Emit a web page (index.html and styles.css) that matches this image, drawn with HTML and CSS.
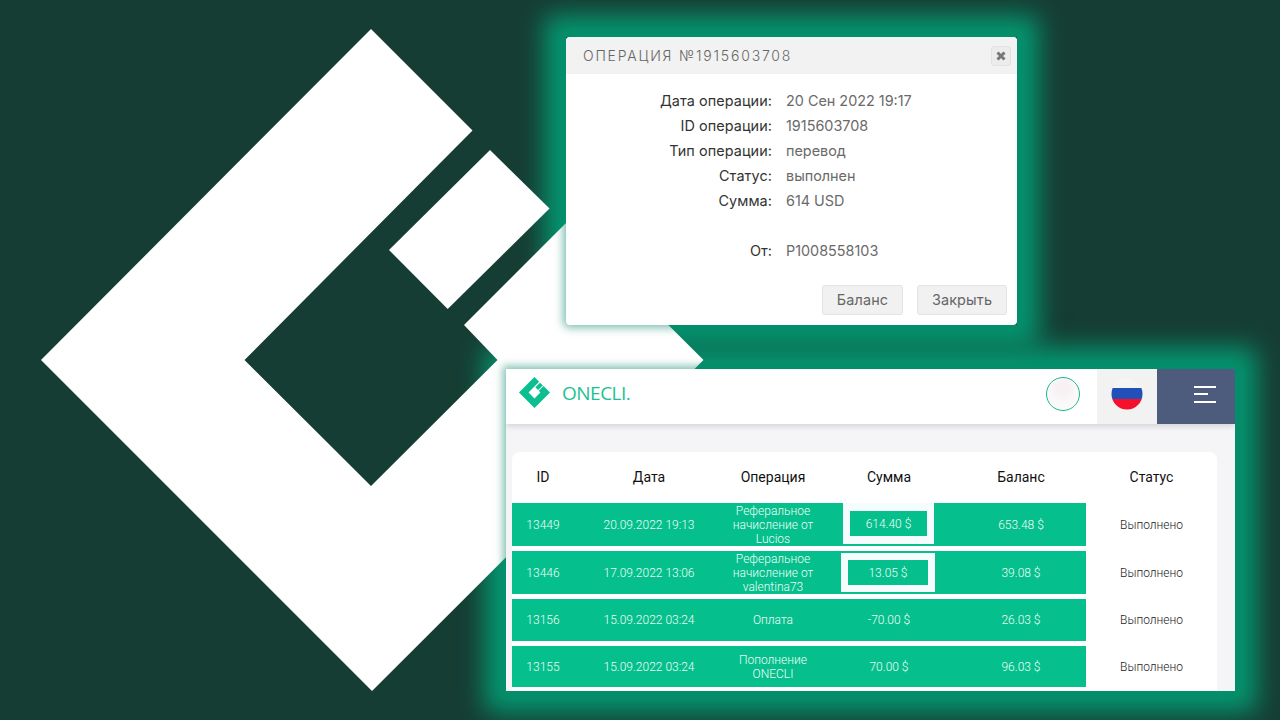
FILE: index.html
```html
<!DOCTYPE html>
<html lang="ru">
<head>
<meta charset="utf-8">
<title>ONECLI</title>
<link rel="stylesheet" href="styles.css">
</head>
<body>
<main class="canvas">
  <div class="glow glow-modal"></div>
  <div class="glow glow-app"></div>
  <svg class="mark" width="1280" height="720" viewBox="0 0 1280 720">
    <polygon fill="#fff" points="371,29 472.5,130.5 244.5,360 371,486 497.5,360 464,325 566,223 703.5,360 372,691 41,360"/>
    <polygon fill="#fff" points="490,150 549.5,208.5 447.7,309 389,250"/>
  </svg>

  <section class="modal">
    <header class="modal-head">
      <h2 class="modal-title">ОПЕРАЦИЯ №1915603708</h2>
      <span class="modal-close">
        <svg width="12" height="12" viewBox="0 0 12 12"><path d="M2.5 2.5 9.5 9.5M9.5 2.5 2.5 9.5" stroke="#777" stroke-width="3" fill="none"/></svg>
      </span>
    </header>
    <dl class="details">
      <dt>Дата операции:</dt><dd>20 Сен 2022 19:17</dd>
      <dt>ID операции:</dt><dd>1915603708</dd>
      <dt>Тип операции:</dt><dd>перевод</dd>
      <dt>Статус:</dt><dd>выполнен</dd>
      <dt>Сумма:</dt><dd>614 USD</dd>
      <dt>&nbsp;</dt><dd>&nbsp;</dd>
      <dt>От:</dt><dd>P1008558103</dd>
    </dl>
    <footer class="modal-foot">
      <span class="btn btn-balance">Баланс</span>
      <span class="btn btn-close">Закрыть</span>
    </footer>
  </section>

  <section class="app">
    <nav class="nav">
      <div class="brand">
        <svg class="brand-icon" width="31" height="31" viewBox="41 29 662 662">
          <polygon fill="#0bbf8e" points="371,29 472.5,130.5 244.5,360 371,486 497.5,360 464,325 566,223 703.5,360 372,691 41,360"/>
          <polygon fill="#0bbf8e" points="490,150 549.5,208.5 447.7,309 389,250"/>
        </svg>
        <span class="brand-name">ONECLI.</span>
      </div>
      <div class="avatar"></div>
      <div class="lang">
        <svg width="32" height="32" viewBox="0 0 32 32">
          <defs><clipPath id="flag-disc"><circle cx="16" cy="16" r="15.5"/></clipPath></defs>
          <g clip-path="url(#flag-disc)">
            <rect width="32" height="10" fill="#f5f5f5"/>
            <rect y="10" width="32" height="11" fill="#2150b8"/>
            <rect y="21" width="32" height="11" fill="#f5102c"/>
          </g>
        </svg>
      </div>
      <div class="menu">
        <span class="bar"></span>
        <span class="bar bar-short"></span>
        <span class="bar"></span>
      </div>
    </nav>
    <div class="app-body">
      <div class="card">
        <div class="thead">
          <span>ID</span><span>Дата</span><span>Операция</span><span>Сумма</span><span>Баланс</span><span>Статус</span>
        </div>
        <div class="row">
          <span class="cell">13449</span><span class="cell">20.09.2022 19:13</span><span class="cell">Реферальное начисление от Lucios</span><span class="cell"><b class="sum sum-first">614.40 $</b></span><span class="cell">653.48 $</span><span class="status">Выполнено</span>
        </div>
        <div class="row">
          <span class="cell">13446</span><span class="cell">17.09.2022 13:06</span><span class="cell">Реферальное начисление от valentina73</span><span class="cell"><b class="sum sum-second">13.05 $</b></span><span class="cell">39.08 $</span><span class="status">Выполнено</span>
        </div>
        <div class="row row-mid">
          <span class="cell">13156</span><span class="cell">15.09.2022 03:24</span><span class="cell">Оплата</span><span class="cell">-70.00 $</span><span class="cell">26.03 $</span><span class="status">Выполнено</span>
        </div>
        <div class="row row-last">
          <span class="cell">13155</span><span class="cell">15.09.2022 03:24</span><span class="cell">Пополнение ONECLI</span><span class="cell">70.00 $</span><span class="cell">96.03 $</span><span class="status">Выполнено</span>
        </div>
      </div>
    </div>
  </section>
</main>
</body>
</html>
```
FILE: styles.css
```css
* { box-sizing: border-box; }
html, body { margin: 0; padding: 0; }
body { background: #163d33; font-family: "Roboto", "Liberation Sans", sans-serif; }
.canvas { position: relative; width: 1280px; height: 720px; overflow: hidden; background: #163d33; }
.mark { position: absolute; left: 0; top: 0; }

.glow { position: absolute; box-shadow: 0 0 24px 21px #059a73; }
.glow-modal { left: 566px; top: 37px; width: 451px; height: 288px; }
.glow-app { left: 506px; top: 369px; width: 729px; height: 322px; }

.modal {
  position: absolute; left: 566px; top: 37px; width: 451px; height: 288px;
  background: #fff; border-radius: 4px;
  box-shadow: 0 0 8px 3px rgba(4, 130, 100, .5);
  display: flex; flex-direction: column;
  font-family: "Inter", "Open Sans", sans-serif;
}
.modal-head {
  height: 37px; background: #f2f2f2; border-radius: 4px 4px 0 0;
  display: flex; align-items: center; justify-content: space-between;
  padding: 0 6px 0 17px;
}
.modal-title { margin: 0; font-size: 14px; font-weight: 300; letter-spacing: 1.8px; color: #666; }
.modal-close {
  width: 20px; height: 20px; background: #ececec; border: 1px solid #e2e2e2; border-radius: 3px;
  display: flex; align-items: center; justify-content: center;
}
.details {
  margin: 14px 0 0; display: grid; grid-template-columns: 206px 1fr; column-gap: 14px;
  font-size: 14.4px; line-height: 25px;
}
.details dt { text-align: right; color: #333; letter-spacing: .08px; }
.details dd { margin: 0; color: #6a6a6a; }
.modal-foot { margin-top: auto; padding: 0 10px 10px 0; display: flex; justify-content: flex-end; gap: 14px; }
.btn {
  height: 30px; background: #f1f1f1; border: 1px solid #e3e3e3; border-radius: 3px;
  color: #666; font-size: 14.4px; line-height: 28px; text-align: center; letter-spacing: .15px;
}
.btn-balance { width: 81px; }
.btn-close { width: 90px; }

.app {
  position: absolute; left: 506px; top: 369px; width: 729px; height: 322px;
  background: #f5f5f7; overflow: hidden;
  box-shadow: 0 0 8px 3px rgba(4, 130, 100, .5);
}
.nav {
  height: 55px; background: #fff; display: flex; align-items: stretch;
  box-shadow: 0 2px 6px rgba(0,0,0,.15); position: relative;
}
.brand { display: flex; align-items: center; gap: 12px; padding: 0 0 8px 13px; flex: 1; height: 55px; }
.brand-name { font-family: "Open Sans", sans-serif; font-size: 19px; font-weight: 400; color: #1fbf94; letter-spacing: -.5px; }
.avatar {
  width: 34px; height: 34px; border-radius: 50%; border: 1.7px solid #1fb88a;
  background: radial-gradient(circle at 50% 32%, #f8f0f3 0 6px, #f9f7f9 12px, #fdfdfd 100%);
  align-self: flex-start; margin: 8px 17px 0 0;
}
.lang { width: 60px; background: #f2f2f2; display: flex; align-items: flex-start; justify-content: center; padding-top: 9px; }
.menu {
  width: 78px; background: #4d5b7d; display: flex; flex-direction: column; gap: 5.5px;
  align-items: flex-start; padding: 16.5px 0 0 37px;
}
.bar { width: 22px; height: 2px; background: #fff; }
.bar-short { width: 14px; }

.app-body { padding: 28px 18px 0 6px; }
.card { background: #fff; border-radius: 8px 8px 0 0; height: 240px; }
.thead {
  display: grid; grid-template-columns: 62px 150px 98px 134px 130px 131px; height: 51px; align-items: center;
  font-size: 14px; color: #111; text-align: center; padding-bottom: 2px;
}
.row {
  display: grid; grid-template-columns: 62px 150px 98px 134px 130px 131px; height: 43px; margin-bottom: 5px;
  font-size: 12px; font-weight: 300; text-align: center; line-height: 14px;
}
.row-mid { height: 42px; }
.row-last { height: 41px; }
.cell { background: #05c08c; color: #eefdf8; display: flex; align-items: center; justify-content: center; }
.status { color: #222; display: flex; align-items: center; justify-content: center; }
.sum { font-weight: 300; border: solid #f4fdfb; display: flex; align-items: center; justify-content: center; }
.sum-first { width: 91px; height: 41px; border-width: 8px 7px; margin-right: 1px; align-self: flex-start; }
.sum-second { width: 94px; height: 39px; border-width: 7px; margin-right: 2px; }
```
